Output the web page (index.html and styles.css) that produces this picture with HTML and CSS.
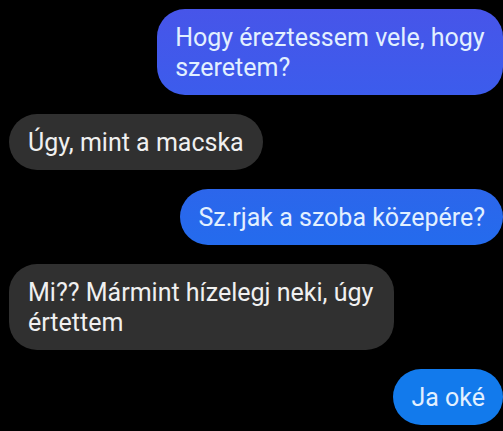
FILE: index.html
```html
<!DOCTYPE html>
<html lang="hu">
<head>
<meta charset="utf-8">
<meta name="viewport" content="width=device-width, initial-scale=1">
<title>Csevegés</title>
<link rel="stylesheet" href="styles.css">
</head>
<body>
<main class="chat">
  <p class="message sent violet">Hogy éreztessem vele, hogy szeretem?</p>
  <p class="message received">Úgy, mint a macska</p>
  <p class="message sent royal">Sz.rjak a szoba közepére?</p>
  <p class="message received">Mi?? Mármint hízelegj neki, úgy értettem</p>
  <p class="message sent azure">Ja oké</p>
</main>
</body>
</html>
```
FILE: styles.css
```css
* {
  box-sizing: border-box;
}

body {
  margin: 0;
  background: #000;
  color: #f0f0f0;
  font-family: Roboto, "Liberation Sans", sans-serif;
  font-size: 25px;
  line-height: 30px;
}

.chat {
  display: flex;
  flex-direction: column;
  gap: 19px;
  padding: 9px 0 6px 9px;
}

.message {
  margin: 0;
  padding: 14px 19px 12px;
  border-radius: 28px;
}

.sent {
  align-self: flex-end;
  max-width: 70%;
  padding-right: 18px;
  padding-left: 18px;
  color: #e2f0ff;
}

.received {
  align-self: flex-start;
  max-width: 78%;
  background: #303030;
}

.violet {
  background: linear-gradient(#4755e9, #3c5cec);
}

.royal {
  background: linear-gradient(#2c66eb, #246bed);
}

.azure {
  background: #127aec;
}
```
